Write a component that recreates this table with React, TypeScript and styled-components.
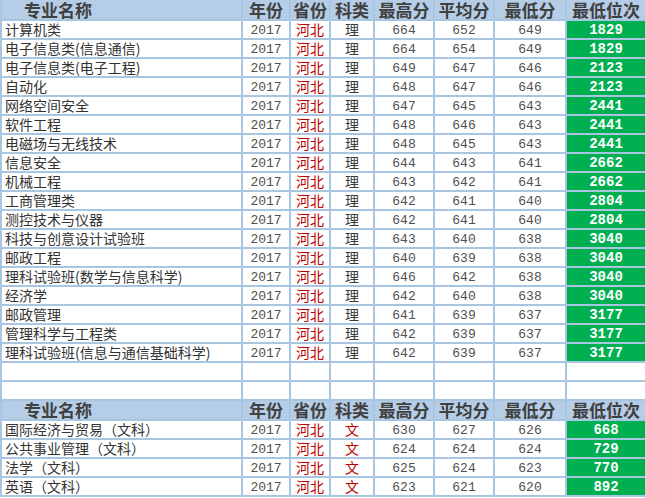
import React from "react";
import styled, { createGlobalStyle } from "styled-components";

const Global = createGlobalStyle`
  html, body { margin: 0; padding: 0; background: #ffffff; }
  body { font-family: "Noto Sans CJK SC", "Noto Sans", sans-serif; }
`;

const Sheet = styled.table`
  width: 645px;
  border-collapse: collapse;
  table-layout: fixed;
  border-top: hidden;
`;

const HeadRow = styled.tr`
  height: 20px;
`;

const Row = styled.tr`
  height: 19px;
`;

const HeadCell = styled.th<{ $left?: boolean }>`
  height: 18px;
  padding: 0 ${(p) => (p.$left ? "0 0 22px" : "0")};
  border: 2px solid #a8c5e2;
  background: #b6cde7;
  color: #404040;
  font-family: "Noto Sans CJK SC", sans-serif;
  font-size: 17px;
  font-weight: 700;
  line-height: 18px;
  text-align: ${(p) => (p.$left ? "left" : "center")};
  white-space: nowrap;
`;

const Cell = styled.td`
  height: 17px;
  padding: 0;
  border: 2px solid #a8c5e2;
  background: #ffffff;
  line-height: 17px;
  white-space: nowrap;
  overflow: hidden;
  vertical-align: middle;
`;

const NameCell = styled(Cell)`
  padding-left: 3px;
  color: #333333;
  font-family: "Noto Sans CJK SC", sans-serif;
  font-size: 14px;
  text-align: left;
`;

const NumCell = styled(Cell)`
  padding-top: 2px;
  height: 15px;
  color: #505050;
  font-family: "Liberation Mono", monospace;
  font-size: 13px;
  line-height: 15px;
  text-align: center;
`;

const TextCell = styled(Cell)<{ $red?: boolean }>`
  color: ${(p) => (p.$red ? "#c00000" : "#3a3a3a")};
  font-family: "Noto Sans CJK SC", sans-serif;
  font-size: 14px;
  text-align: center;
`;

const RankCell = styled(Cell)`
  padding-top: 2px;
  height: 15px;
  background: #00b050;
  color: #ffffff;
  font-family: "Liberation Mono", monospace;
  font-size: 14px;
  font-weight: 700;
  line-height: 15px;
  text-align: center;
`;

type Item = [string, string, string, string, string];

const science: Item[] = [
  ["计算机类", "664", "652", "649", "1829"],
  ["电子信息类(信息通信)", "664", "654", "649", "1829"],
  ["电子信息类(电子工程)", "649", "647", "646", "2123"],
  ["自动化", "648", "647", "646", "2123"],
  ["网络空间安全", "647", "645", "643", "2441"],
  ["软件工程", "648", "646", "643", "2441"],
  ["电磁场与无线技术", "648", "645", "643", "2441"],
  ["信息安全", "644", "643", "641", "2662"],
  ["机械工程", "643", "642", "641", "2662"],
  ["工商管理类", "642", "641", "640", "2804"],
  ["测控技术与仪器", "642", "641", "640", "2804"],
  ["科技与创意设计试验班", "643", "640", "638", "3040"],
  ["邮政工程", "640", "639", "638", "3040"],
  ["理科试验班(数学与信息科学)", "646", "642", "638", "3040"],
  ["经济学", "642", "640", "638", "3040"],
  ["邮政管理", "641", "639", "637", "3177"],
  ["管理科学与工程类", "642", "639", "637", "3177"],
  ["理科试验班(信息与通信基础科学)", "642", "639", "637", "3177"],
];

const arts: Item[] = [
  ["国际经济与贸易（文科）", "630", "627", "626", "668"],
  ["公共事业管理（文科）", "624", "624", "624", "729"],
  ["法学（文科）", "625", "624", "623", "770"],
  ["英语（文科）", "623", "621", "620", "892"],
];

const widths = [241, 48, 40, 44, 60, 60, 72, 80];

const Header = () => (
  <HeadRow>
    <HeadCell $left>专业名称</HeadCell>
    <HeadCell>年份</HeadCell>
    <HeadCell>省份</HeadCell>
    <HeadCell>科类</HeadCell>
    <HeadCell>最高分</HeadCell>
    <HeadCell>平均分</HeadCell>
    <HeadCell>最低分</HeadCell>
    <HeadCell>最低位次</HeadCell>
  </HeadRow>
);

const DataRow = ({ item, kind }: { item: Item; kind: string }) => (
  <Row>
    <NameCell>{item[0]}</NameCell>
    <NumCell>2017</NumCell>
    <TextCell $red>河北</TextCell>
    <TextCell $red={kind === "文"}>{kind}</TextCell>
    <NumCell>{item[1]}</NumCell>
    <NumCell>{item[2]}</NumCell>
    <NumCell>{item[3]}</NumCell>
    <RankCell>{item[4]}</RankCell>
  </Row>
);

const EmptyRow = () => (
  <Row>
    {widths.map((_, i) => (
      <Cell key={i} />
    ))}
  </Row>
);

export default function App() {
  return (
    <>
      <Global />
      <Sheet>
        <colgroup>
          {widths.map((w, i) => (
            <col key={i} style={{ width: w }} />
          ))}
        </colgroup>
        <tbody>
          <Header />
          {science.map((it) => (
            <DataRow key={it[0]} item={it} kind="理" />
          ))}
          <EmptyRow />
          <EmptyRow />
          <Header />
          {arts.map((it) => (
            <DataRow key={it[0]} item={it} kind="文" />
          ))}
        </tbody>
      </Sheet>
    </>
  );
}
